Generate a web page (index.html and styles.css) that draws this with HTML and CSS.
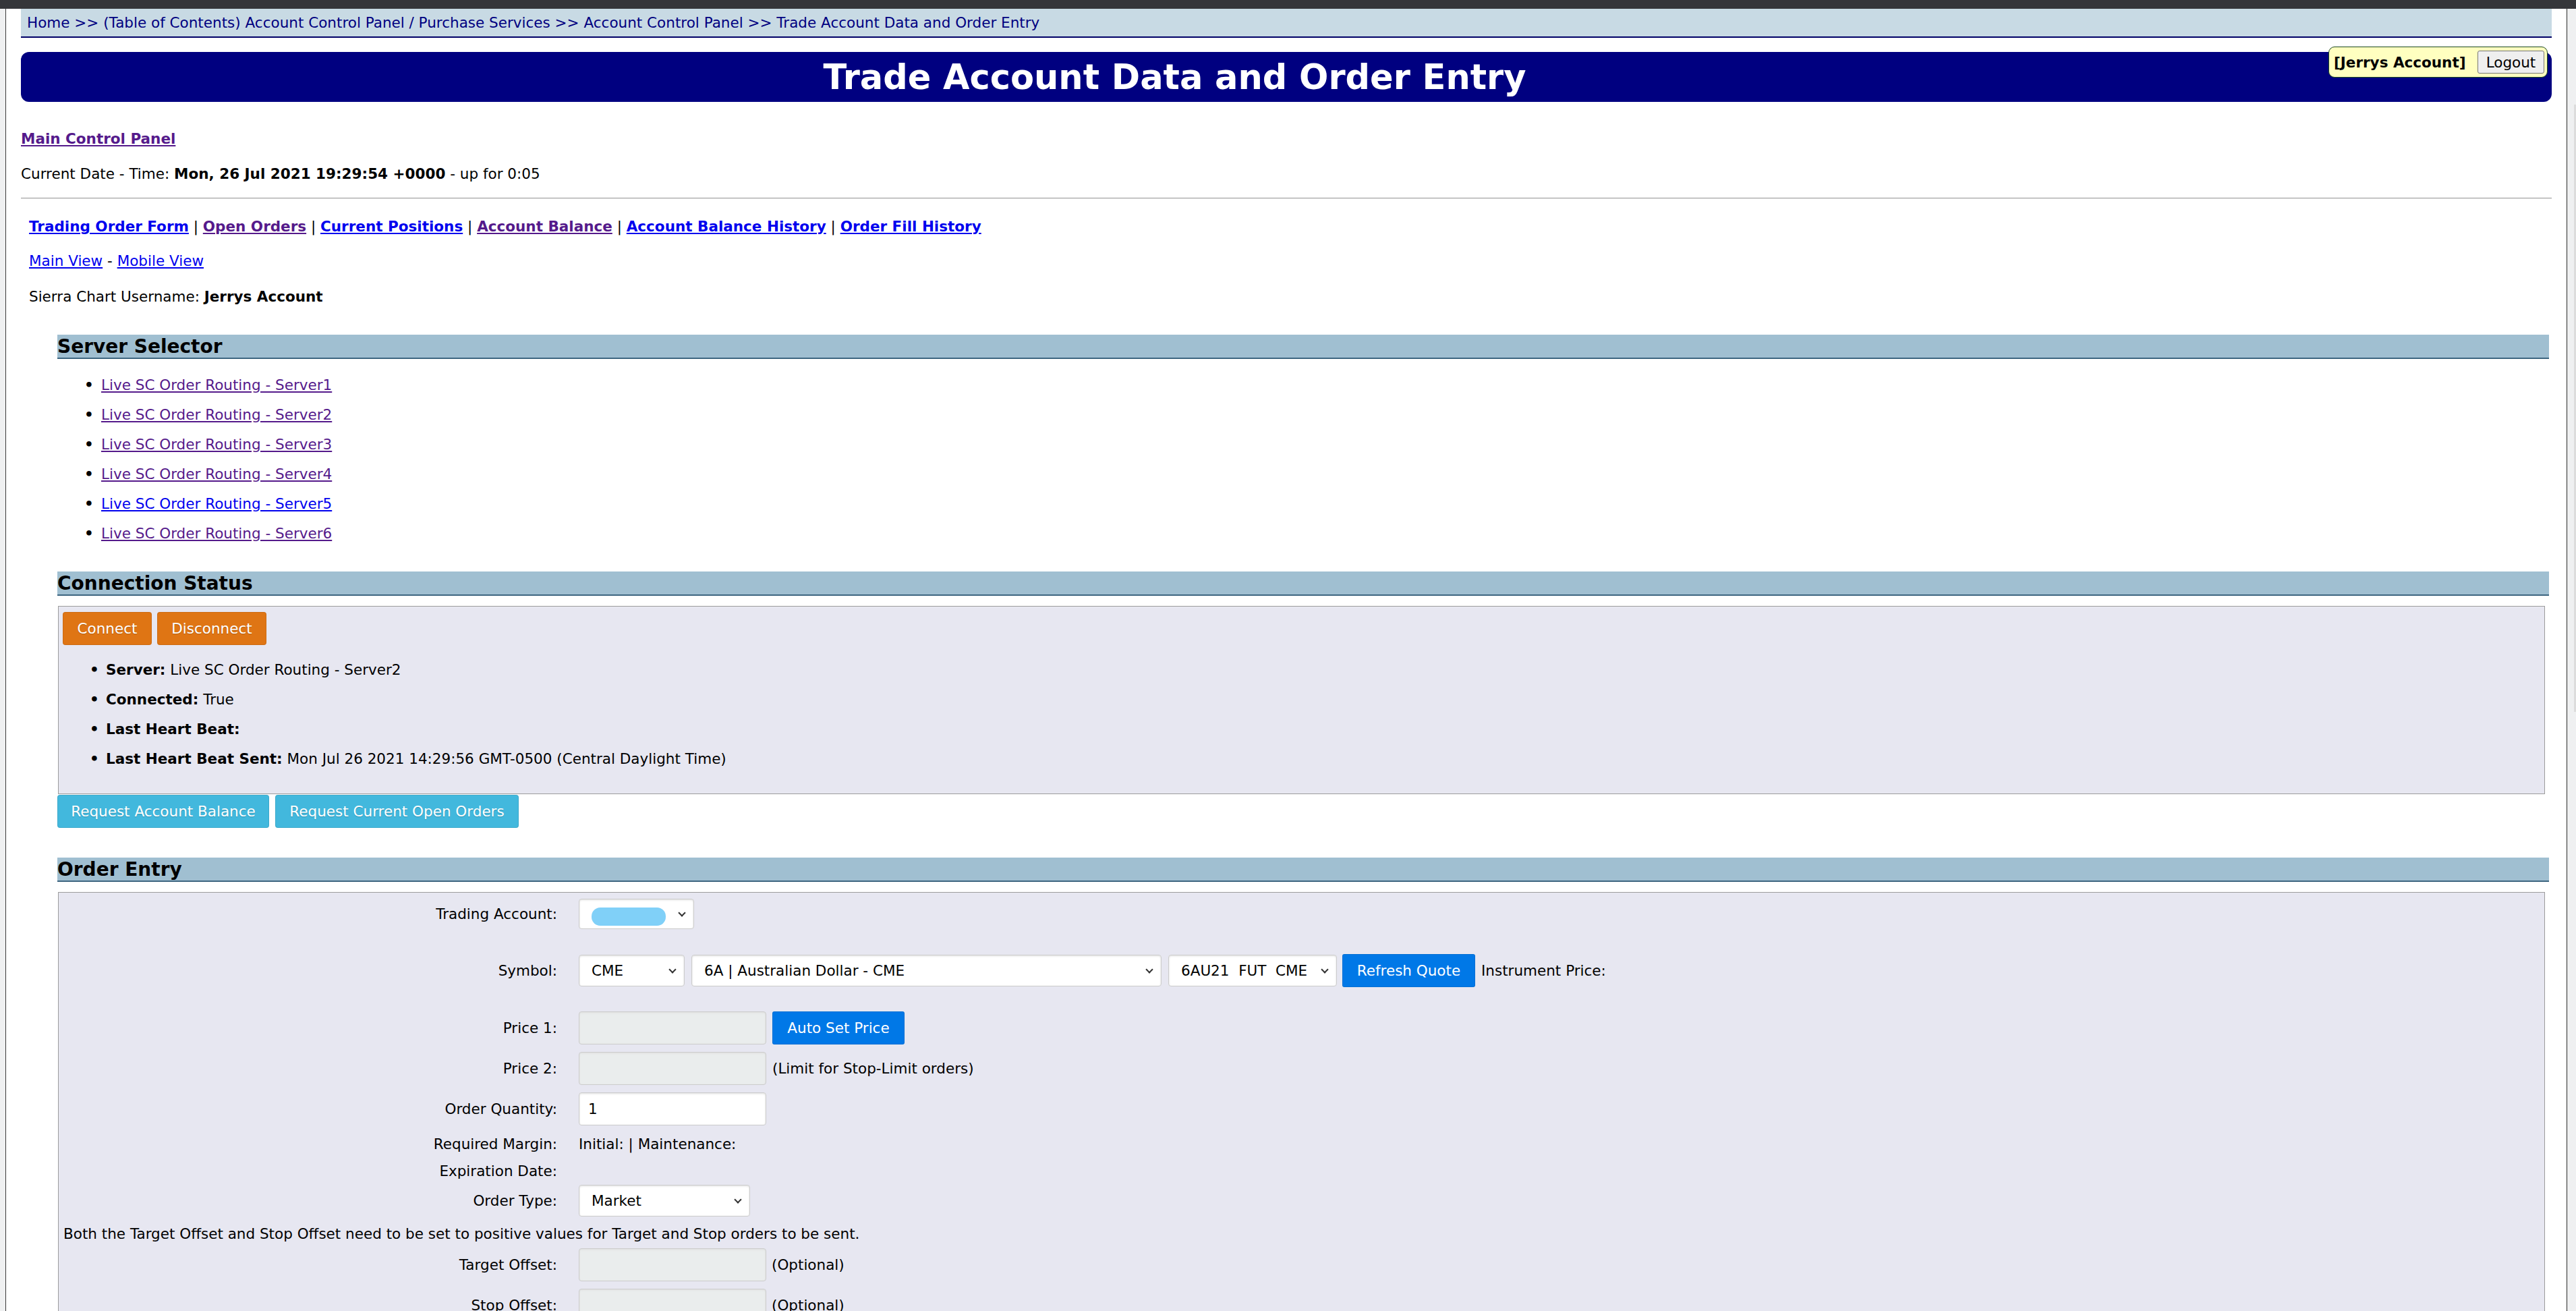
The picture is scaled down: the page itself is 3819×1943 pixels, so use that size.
FILE: index.html
```html
<!DOCTYPE html>
<html lang="en">
<head>
<meta charset="utf-8">
<title>Trade Account Data and Order Entry</title>
<link rel="stylesheet" href="styles.css">
</head>
<body>
<div class="topbar"></div>
<div class="window">
  <div class="edge-left"></div>
  <div class="page">
    <div class="crumbs"><a href="#">Home</a> &gt;&gt; <a href="#">(Table of Contents) Account Control Panel / Purchase Services</a> &gt;&gt; <a href="#">Account Control Panel</a> &gt;&gt; <a href="#">Trade Account Data and Order Entry</a></div>

    <div class="masthead">
      <h1>Trade Account Data and Order Entry</h1>
      <div class="login"><b>[Jerrys Account]</b><button class="logout">Logout</button></div>
    </div>

    <p class="mcp"><a href="#" class="v">Main Control Panel</a></p>
    <p class="date">Current Date - Time: <b>Mon, 26 Jul 2021 19:29:54 +0000</b> - up for 0:05</p>
    <hr>

    <div class="app">
      <p class="nav"><a href="#">Trading Order Form</a> | <a href="#" class="v">Open Orders</a> | <a href="#">Current Positions</a> | <a href="#" class="v">Account Balance</a> | <a href="#">Account Balance History</a> | <a href="#">Order Fill History</a></p>
      <p class="views"><a href="#">Main View</a> - <a href="#">Mobile View</a></p>
      <p class="user">Sierra Chart Username: <b>Jerrys Account</b></p>

      <div class="sec">
        <h2>Server Selector</h2>
        <ul class="servers">
          <li><a href="#" class="v">Live SC Order Routing - Server1</a></li>
          <li><a href="#" class="v">Live SC Order Routing - Server2</a></li>
          <li><a href="#" class="v">Live SC Order Routing - Server3</a></li>
          <li><a href="#" class="v">Live SC Order Routing - Server4</a></li>
          <li><a href="#">Live SC Order Routing - Server5</a></li>
          <li><a href="#" class="v">Live SC Order Routing - Server6</a></li>
        </ul>

        <h2 class="h-conn">Connection Status</h2>
        <div class="panel conn">
          <div class="btns">
            <button class="btn warn w-connect">Connect</button>
            <button class="btn warn w-disconnect">Disconnect</button>
          </div>
          <ul class="status">
            <li><b>Server:</b> Live SC Order Routing - Server2</li>
            <li><b>Connected:</b> True</li>
            <li><b>Last Heart Beat:</b></li>
            <li><b>Last Heart Beat Sent:</b> Mon Jul 26 2021 14:29:56 GMT-0500 (Central Daylight Time)</li>
          </ul>
        </div>
        <div class="req">
          <button class="btn info w-rab">Request Account Balance</button>
          <button class="btn info w-rco">Request Current Open Orders</button>
        </div>

        <h2 class="h-oe">Order Entry</h2>
        <form class="panel order">
          <div class="row r-ta">
            <label>Trading Account:</label>
            <span class="sel w-ta"><select class="h45"><option></option></select><span class="blob"></span></span>
          </div>
          <div class="row r-sym">
            <label>Symbol:</label>
            <span class="sel w-cme"><select class="h47"><option>CME</option></select></span>
            <span class="sel w-6a gap10"><select class="h47"><option>6A | Australian Dollar - CME</option></select></span>
            <span class="sel w-6au gap10"><select class="h47"><option>6AU21&nbsp;&nbsp;FUT&nbsp;&nbsp;CME</option></select></span>
            <button type="button" class="btn pri w-rq gap8">Refresh Quote</button>
            <span class="gap9">Instrument Price:</span>
          </div>
          <div class="row r-p1">
            <label>Price 1:</label>
            <input class="inp" disabled>
            <button type="button" class="btn pri w-asp gap9">Auto Set Price</button>
          </div>
          <div class="row r-p2">
            <label>Price 2:</label>
            <input class="inp" disabled>
            <span class="gap9">(Limit for Stop-Limit orders)</span>
          </div>
          <div class="row r-qty">
            <label>Order Quantity:</label>
            <input class="inp" value="1">
          </div>
          <div class="row r-txt r-rm">
            <label>Required Margin:</label>
            <span>Initial: | Maintenance:</span>
          </div>
          <div class="row r-txt r-exp">
            <label>Expiration Date:</label>
          </div>
          <div class="row r-ot">
            <label>Order Type:</label>
            <span class="sel w-ot"><select class="h47"><option>Market</option></select></span>
          </div>
          <p class="note">Both the Target Offset and Stop Offset need to be set to positive values for Target and Stop orders to be sent.</p>
          <div class="row r-to">
            <label>Target Offset:</label>
            <input class="inp" disabled>
            <span class="gap8">(Optional)</span>
          </div>
          <div class="row r-so">
            <label>Stop Offset:</label>
            <input class="inp" disabled>
            <span class="gap8">(Optional)</span>
          </div>
        </form>
      </div>
    </div>
  </div>
  <div class="edge-right"><div class="thumb"></div></div>
</div>
</body>
</html>
```

FILE: styles.css
```css
html, body {
  margin: 0;
  height: 100%;
  overflow: hidden;
}
body {
  font-family: "DejaVu Sans", Verdana, sans-serif;
  font-size: 21.5px;
  line-height: 25px;
  color: #000;
  background: #fff;
  display: flex;
  flex-direction: column;
}
.topbar {
  height: 13px;
  flex: none;
  background: #35363a;
}
.window {
  flex: 1;
  min-height: 0;
  display: flex;
}
.edge-left {
  flex: none;
  width: 8px;
  background: #eff0f1;
  border-right: 1px solid #3a3a3a;
}
.page {
  flex: 1;
  min-width: 0;
  padding: 0 22px;
  overflow: hidden;
}
.edge-right {
  flex: none;
  width: 13px;
  background: #eff0f1;
  border-left: 1px solid #2b2b2b;
  display: flex;
  justify-content: flex-end;
}
.thumb {
  width: 3px;
  height: 900px;
  margin-top: 142px;
  background: #dcdcdc;
}

a { color: #0000ee; }
a.v { color: #551a8b; }

/* breadcrumb */
.crumbs {
  height: 41px;
  line-height: 42px;
  padding-left: 9px;
  background: #c8dae4;
  border-bottom: 2px solid #000066;
  color: #000080;
  white-space: nowrap;
}
.crumbs a {
  color: #000080;
  text-decoration: none;
}

/* header */
.masthead {
  margin-top: 21px;
  height: 74px;
  background: #000080;
  border-radius: 12px;
  display: flex;
  align-items: flex-start;
}
.masthead h1 {
  flex: 1;
  margin: 0;
  text-align: center;
  color: #fff;
  font-size: 51px;
  line-height: 75px;
  font-weight: bold;
}
.login {
  flex: none;
  box-sizing: border-box;
  width: 325px;
  height: 46px;
  margin: -8px 6px 0 0;
  padding: 0 4px 0 7px;
  background: #ffffc0;
  border: 1px solid #1e4a1e;
  border-radius: 9px;
  display: flex;
  align-items: center;
  justify-content: space-between;
}
.logout {
  width: 99px;
  height: 34px;
  padding: 0;
  font: inherit;
  color: #000;
  background: #efefef;
  border: 1px solid #767676;
  border-radius: 3px;
}

.mcp { margin: 42px 0 0; font-weight: bold; }
.date { margin: 27px 0 0; }
hr {
  margin: 23px 0 0;
  height: 0;
  border: 0;
  border-top: 1px solid #a0a0a0;
  border-bottom: 1px solid #ececec;
}

.app { padding-left: 12px; }
.nav { margin: 28px 0 0; }
.nav a { font-weight: bold; }
.views { margin: 26px 0 0; }
.user { margin: 28px 0 0; }

.sec { margin: 44px 4px 0 42px; }
.sec h2 {
  margin: 0;
  height: 34px;
  line-height: 35px;
  background: #a0bfd1;
  border-bottom: 2px solid #3d6580;
  font-size: 28px;
  font-weight: bold;
  color: #000;
}
.sec h2.h-conn { margin-top: 34px; }
.sec h2.h-oe { margin-top: 44px; }

.servers {
  list-style: none;
  margin: 17px 0 0;
  padding-left: 65px;
}
.servers li { line-height: 44px; }
.servers li::before,
.status li::before {
  content: "\2022";
  display: inline-block;
  width: 25px;
  margin-left: -25px;
  color: #000;
  font-weight: bold;
}

.panel {
  background: #e7e7f1;
  border: 1px solid #9c9c9c;
  margin: 15px 6px 0 1px;
}
.conn { padding: 8px 0 29px 6px; }
.btns { display: flex; gap: 8px; }

.btn {
  box-sizing: border-box;
  height: 49px;
  padding: 0;
  border: 1px solid rgba(0, 0, 0, 0.08);
  border-radius: 4px;
  font: inherit;
  color: #fff;
  text-shadow: 0 1px 1px rgba(0, 0, 0, 0.2);
}
.warn { background: rgb(223, 117, 20); }
.info { background: rgb(66, 184, 221); }
.pri { background: rgb(0, 120, 231); border-radius: 3px; text-shadow: none; }
.w-connect { width: 132px; }
.w-disconnect { width: 162px; }
.w-rab { width: 314px; }
.w-rco { width: 361px; }
.w-rq { width: 197px; }
.w-asp { width: 196px; }

.status {
  list-style: none;
  margin: 15px 0 0;
  padding-left: 64px;
}
.status li { line-height: 44px; }
.status li::before { width: 24px; margin-left: -24px; }

.req { display: flex; gap: 9px; margin-top: 1px; }

/* order form */
.order { padding: 9px 0 120px 7px; }
.row {
  display: flex;
  align-items: center;
  white-space: nowrap;
}
.row > label {
  flex: none;
  width: 732px;
  margin-right: 32px;
  text-align: right;
}
.r-ta { height: 45px; }
.r-sym { height: 49px; margin-top: 37px; }
.r-p1 { height: 49px; margin-top: 36px; }
.r-p2 { height: 49px; margin-top: 11px; }
.r-qty { height: 49px; margin-top: 11px; }
.r-rm { height: 26px; margin-top: 14px; }
.r-exp { height: 26px; margin-top: 14px; }
.r-ot { height: 47px; margin-top: 8px; }
.r-to { height: 49px; margin-top: 8px; }
.r-so { height: 49px; margin-top: 11px; }
.note { margin: 13px 0 0; line-height: 26px; }

.gap8 { margin-left: 8px; }
.gap9 { margin-left: 9px; }
.gap10 { margin-left: 10px; }

.sel {
  position: relative;
  display: inline-block;
  flex: none;
}
.sel select {
  -webkit-appearance: none;
  appearance: none;
  display: block;
  box-sizing: border-box;
  width: 100%;
  margin: 0;
  padding: 0 30px 0 18px;
  font: inherit;
  color: #000;
  background: #fff;
  border: 1px solid #ccc;
  border-radius: 4px;
  box-shadow: inset 0 1px 3px #ddd;
}
.sel select.h45 { height: 45px; }
.sel select.h47 { height: 47px; }
.sel::after {
  content: "";
  position: absolute;
  right: 14px;
  top: 50%;
  width: 6px;
  height: 6px;
  border-right: 2px solid #333;
  border-bottom: 2px solid #333;
  transform: translateY(-75%) rotate(45deg);
  pointer-events: none;
}
.w-ta { width: 171px; }
.w-cme { width: 157px; }
.w-6a { width: 697px; }
.w-6au { width: 250px; }
.w-ot { width: 254px; }
.blob {
  position: absolute;
  left: 19px;
  top: 13px;
  width: 110px;
  height: 27px;
  border-radius: 13px;
  background: #80d0f8;
}

.inp {
  flex: none;
  box-sizing: border-box;
  width: 278px;
  height: 49px;
  margin: 0;
  padding: 0 13px;
  font: inherit;
  color: #000;
  background: #fff;
  border: 1px solid #ccc;
  border-radius: 4px;
  box-shadow: inset 0 1px 3px #ddd;
}
.inp:disabled {
  background: #eaeded;
  color: #cad2d3;
}
```
